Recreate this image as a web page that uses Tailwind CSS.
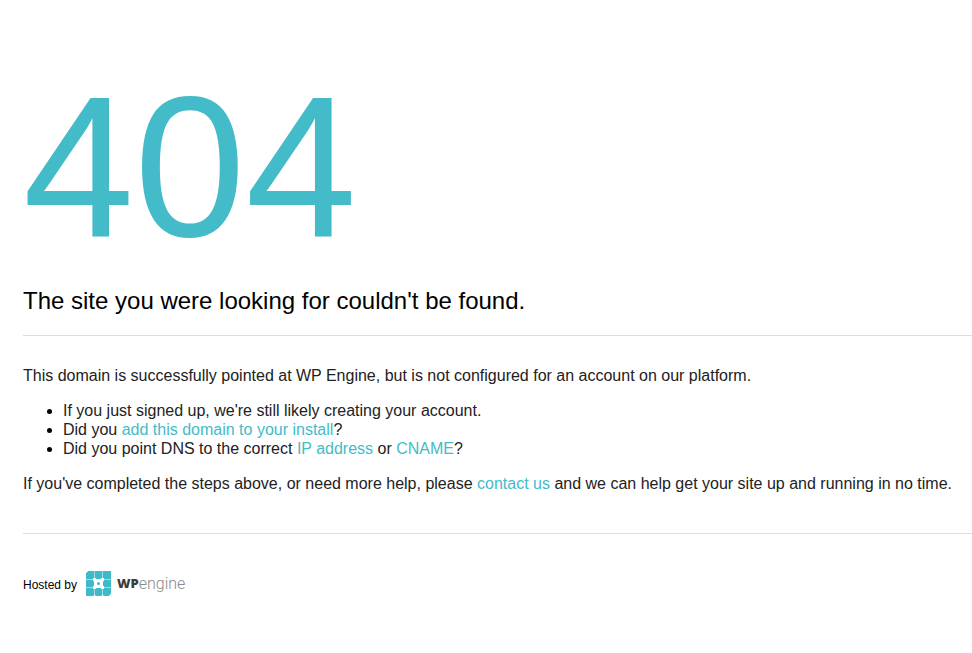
<!DOCTYPE html>
<html lang="en">
<head>
    <meta charset="UTF-8">
    <meta name="viewport" content="width=device-width, initial-scale=1.0">
    <title>404 - Site Not Found</title>
    <script src="https://cdn.jsdelivr.net/npm/@tailwindcss/browser@4"></script>
</head>
<body class="bg-white text-[#222222] font-['Liberation_Sans',Arial,sans-serif] text-base leading-[19px]">
    <div class="pl-[23px] pt-[67px] pb-12">
        <!-- Error heading -->
        <header class="border-b border-[#dddddd] pb-[18px]">
            <h1 class="text-[200px] leading-[200px] text-[#44bbc8]">404</h1>
            <h2 class="mt-[18px] text-2xl text-black">The site you were looking for couldn't be found.</h2>
        </header>

        <!-- Help text -->
        <main class="border-b border-[#dddddd] pt-[30px] pb-10">
            <p>This domain is successfully pointed at WP Engine, but is not configured for an account on our platform.</p>
            <ul class="my-4 list-disc pl-10 marker:text-black">
                <li>If you just signed up, we're still likely creating your account.</li>
                <li>Did you <a href="#" class="text-[#44bbc8] hover:underline">add this domain to your install</a>?</li>
                <li>Did you point DNS to the correct <a href="#" class="text-[#44bbc8] hover:underline">IP address</a> or <a href="#" class="text-[#44bbc8] hover:underline">CNAME</a>?</li>
            </ul>
            <p>If you've completed the steps above, or need more help, please <a href="#" class="text-[#44bbc8] hover:underline">contact us</a> and we can help get your site up and running in no time.</p>
        </main>

        <!-- Hosting credit -->
        <footer class="flex items-center pt-[37px] text-xs text-black">
            <span class="pt-[2px]">Hosted by</span>
            <a href="#" aria-label="WP Engine" class="ml-[9px] flex items-center">
                <svg class="h-[25px] w-[25px]" viewBox="0 0 25 25" aria-hidden="true">
                    <path fill="#40bac8" d="M2 0H25V23L23 25H0V2Z"/>
                    <path fill="none" stroke="#9fdde4" stroke-width="1" d="M8.500 0V25M16.500 0V25M0 8.500H25M0 16.500H25"/>
                    <path fill="#ffffff" d="M7 7H9.500L10.500 8H14.500L15.500 7H18V9.500L17 10.500V14.500L18 15.500V18H15.500L14.500 17H10.500L9.500 18H7V15.500L8 14.500V10.500L7 9.500Z"/>
                    <path fill="#ffffff" d="M0 0H2L0 2ZM7.500 25H9.500L8.500 23ZM15.500 25H17.500L16.500 23ZM25 25V23L23 25Z"/>
                    <circle cx="12.500" cy="12.500" r="1.500" fill="#40bac8"/>
                </svg>
                <span class="ml-[6px] font-['Open_Sans',sans-serif] text-[13px] font-extrabold text-[#3b3b3b]">WP</span>
                <span class="font-['Roboto',sans-serif] text-base font-light text-[#8a8a8a]">engine</span>
            </a>
        </footer>
    </div>
</body>
</html>
